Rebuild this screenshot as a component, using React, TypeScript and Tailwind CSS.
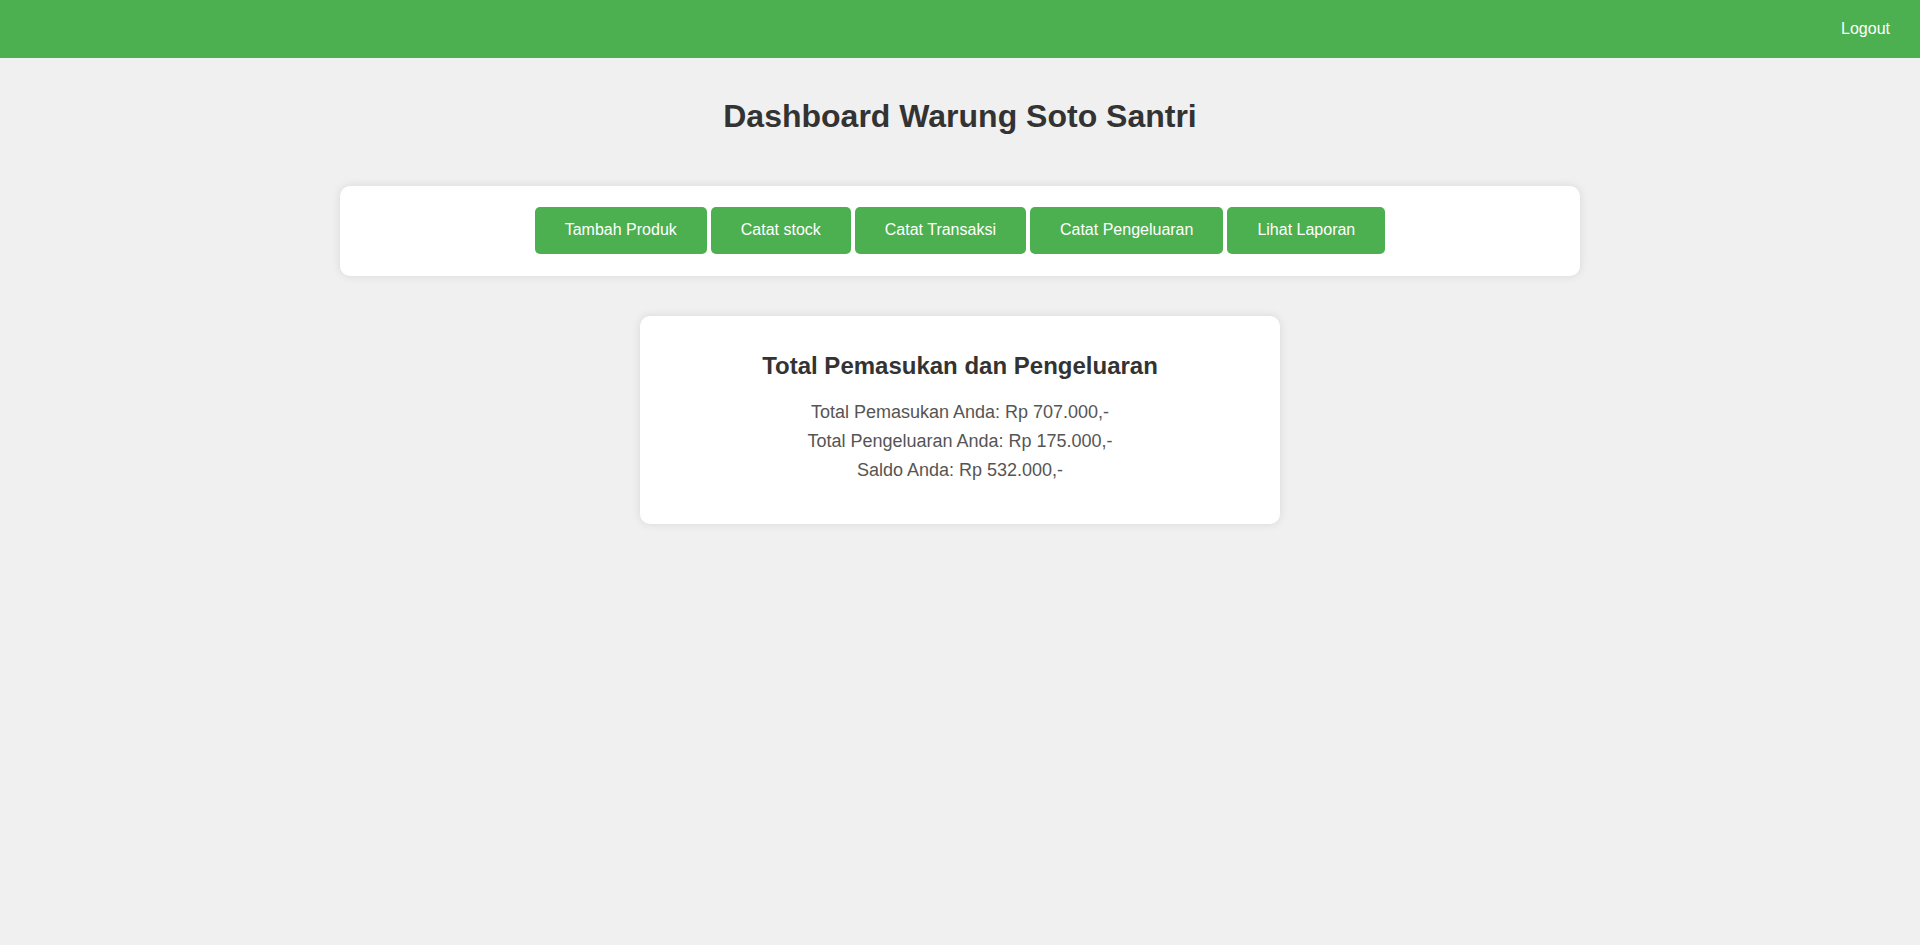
import React from "react";

const actions = ["Tambah Produk", "Catat stock", "Catat Transaksi", "Catat Pengeluaran", "Lihat Laporan"];

const summary = [
  "Total Pemasukan Anda: Rp 707.000,-",
  "Total Pengeluaran Anda: Rp 175.000,-",
  "Saldo Anda: Rp 532.000,-",
];

export default function App() {
  return (
    <div className="min-h-[945px] bg-[#f0f0f0] font-['Liberation_Sans',Arial,sans-serif] text-[#333]">
      {/* Top bar */}
      <header className="h-[58px] bg-[#4CAF50] flex items-center justify-end pr-[30px]">
        <a href="#" className="text-white text-[16px]">
          Logout
        </a>
      </header>

      <main className="flex flex-col items-center">
        <h1 className="mt-[40px] text-[32px] font-bold leading-[36.8px] text-[#333]">
          Dashboard Warung Soto Santri
        </h1>

        {/* Menu buttons */}
        <div className="mt-[51px] w-[1240px] h-[90px] bg-white rounded-[10px] shadow-[0_0_10px_rgba(0,0,0,0.1)] pt-[21px] flex justify-center items-start gap-[4px]">
          {actions.map((label) => (
            <button
              key={label}
              className="h-[47px] px-[30px] bg-[#4CAF50] text-white text-[16px] rounded-[5px] cursor-pointer"
            >
              {label}
            </button>
          ))}
        </div>

        {/* Summary card */}
        <div className="mt-[40px] w-[640px] h-[208px] bg-white rounded-[10px] shadow-[0_0_10px_rgba(0,0,0,0.1)] pt-[36px] flex flex-col items-center">
          <h2 className="text-[24px] font-bold leading-[27.6px] text-[#333]">
            Total Pemasukan dan Pengeluaran
          </h2>
          <div className="mt-[19px] flex flex-col items-center">
            {summary.map((line) => (
              <p key={line} className="text-[18px] leading-[29px] text-[#555]">
                {line}
              </p>
            ))}
          </div>
        </div>
      </main>
    </div>
  );
}
